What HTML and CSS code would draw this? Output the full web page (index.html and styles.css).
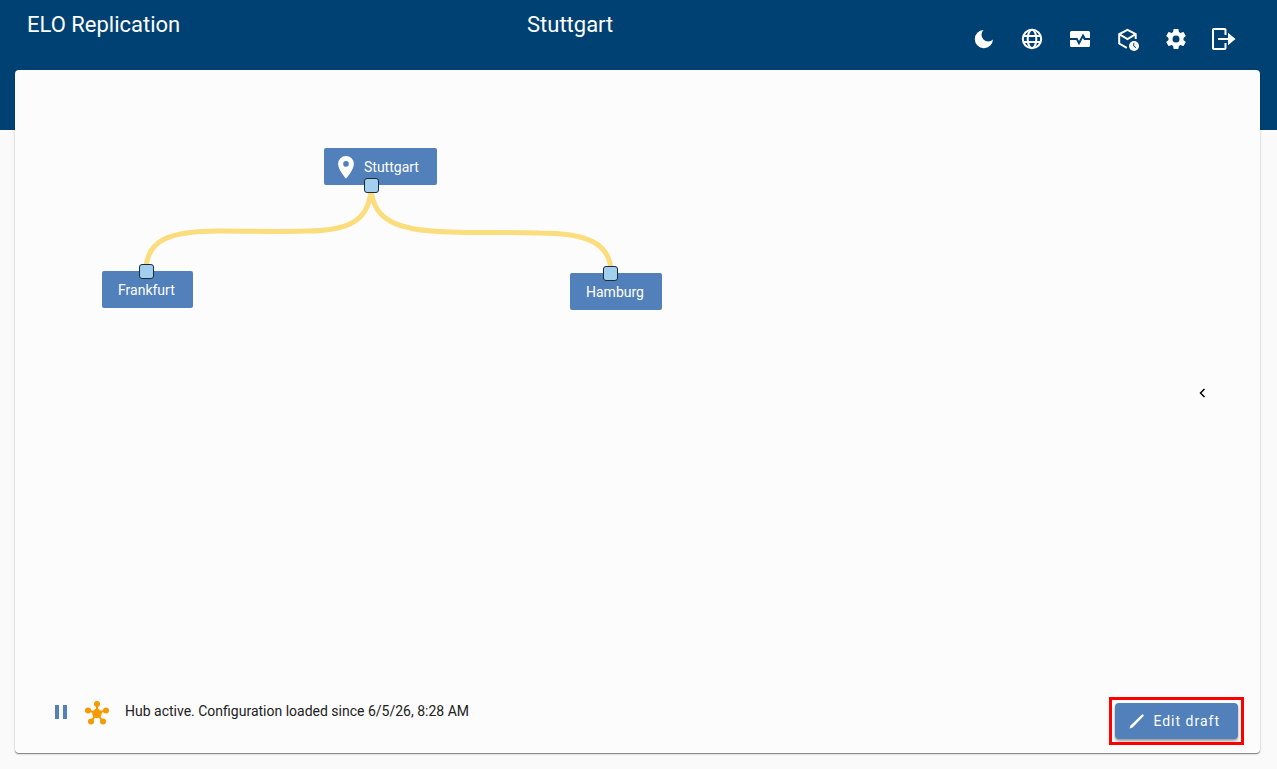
FILE: index.html
```
<!DOCTYPE html>
<html lang="en">
<head>
<meta charset="utf-8">
<title>ELO Replication</title>
<link rel="stylesheet" href="styles.css">
</head>
<body class="page">
<header class="topbar">
  <h1 class="app-title">ELO Replication</h1>
  <h2 class="hub-title">Stuttgart</h2>
  <nav class="actions" aria-label="Tools">
    <button class="icon-button" type="button" aria-label="Dark mode">
      <svg class="icon" viewBox="0 0 24 24"><path d="M11.500 3A9.100 9.100 0 1 0 21 12.600 5.700 5.700 0 1 1 11.500 3Z"/></svg>
    </button>
    <button class="icon-button" type="button" aria-label="Language">
      <svg class="icon" viewBox="0 0 24 24"><g class="line"><circle cx="12" cy="12" r="9.200"/><ellipse cx="12" cy="12" rx="4.300" ry="9.200"/><path d="M3.500 9h17M3.500 15h17"/></g></svg>
    </button>
    <button class="icon-button" type="button" aria-label="Monitoring">
      <svg class="icon" viewBox="0 0 24 24"><path d="M3.500 4h17A1.500 1.500 0 0 1 22 5.500V11h-4.500L15 6.500 11 14 9.500 11H2V5.500A1.500 1.500 0 0 1 3.500 4Z"/><path d="M2 13h6.200l2.800 5.200L14.800 11l1.300 2H22v5.500A1.500 1.500 0 0 1 20.500 20h-17A1.500 1.500 0 0 1 2 18.500Z"/></svg>
    </button>
    <button class="icon-button" type="button" aria-label="Package history">
      <svg class="icon" viewBox="0 0 24 24"><path class="line" d="M10.800 20.800 3.200 16.500V7.200L11.500 2.800l8.200 4.400V12M3.200 7.200l8.300 5 8.200-5"/><circle cx="18" cy="19" r="5"/><path class="clock-hands" d="M17.800 15.800V19.200l2.200 1.500"/></svg>
    </button>
    <button class="icon-button" type="button" aria-label="Settings">
      <svg class="icon" viewBox="0 0 24 24"><path d="M19.43 12.98c.04-.32.07-.64.07-.98s-.03-.66-.07-.98l2.11-1.65c.19-.15.24-.42.12-.64l-2-3.46c-.12-.22-.39-.3-.61-.22l-2.49 1c-.52-.4-1.08-.73-1.69-.98l-.38-2.65C14.46 2.18 14.25 2 14 2h-4c-.25 0-.46.18-.49.42l-.38 2.65c-.61.25-1.17.59-1.69.98l-2.49-1c-.23-.09-.49 0-.61.22l-2 3.46c-.13.22-.07.49.12.64l2.11 1.65c-.04.32-.07.65-.07.98s.03.66.07.98l-2.11 1.65c-.19.15-.24.42-.12.64l2 3.46c.12.22.39.3.61.22l2.49-1c.52.4 1.08.73 1.69.98l.38 2.65c.03.24.24.42.49.42h4c.25 0 .46-.18.49-.42l.38-2.65c.61-.25 1.17-.59 1.69-.98l2.49 1c.23.09.49 0 .61-.22l2-3.46c.12-.22.07-.49-.12-.64l-2.11-1.65zM12 15.5a3.5 3.5 0 1 1 0-7 3.5 3.5 0 0 1 0 7z"/></svg>
    </button>
    <button class="icon-button" type="button" aria-label="Log out">
      <svg class="icon" viewBox="0 0 24 24"><path class="line" d="M13.500 8V2.800Q13.500 2 12.700 2H1.800Q1 2 1 2.800V21.200Q1 22 1.800 22H12.700Q13.500 22 13.500 21.200V16M6 12H18"/><path d="M16 5.800 23.500 12 16 18.200Z"/></svg>
    </button>
  </nav>
</header>

<main class="card">
  <section class="canvas" aria-label="Replication topology">
    <svg class="links" aria-hidden="true">
      <path class="link" d="M356 115C356 150 335 161 291 161C261 162 231 161 204 161C156 161 131 169 131 201"/>
      <path class="link" d="M356 115C356 150 381 161 436 162C462 163 492 162 524 163C572 163 596 173 596 203"/>
    </svg>
    <div class="node node-stuttgart">
      <svg class="pin" viewBox="0 0 24 24"><path d="M12 1a7.9 7.9 0 0 0-7.9 7.9C4.1 14.8 12 23.5 12 23.5s7.900-8.700 7.900-14.600A7.9 7.9 0 0 0 12 1Zm0 10.700a2.800 2.800 0 1 1 0-5.600 2.800 2.800 0 0 1 0 5.600Z"/></svg>
      <span>Stuttgart</span>
    </div>
    <div class="node node-frankfurt">Frankfurt</div>
    <div class="node node-hamburg">Hamburg</div>
    <span class="port port-stuttgart"></span>
    <span class="port port-frankfurt"></span>
    <span class="port port-hamburg"></span>
    <button class="panel-toggle" type="button" aria-label="Open side panel">
      <svg class="chevron" viewBox="0 0 10 10"><path d="M7.500 1 3.500 5l4 4"/></svg>
    </button>
  </section>
  <footer class="statusbar">
    <div class="status">
      <button class="pause" type="button" aria-label="Pause hub">
        <svg class="pause-icon" viewBox="0 0 14 14"><path d="M1 0h4v14H1zM9 0h4v14H9z"/></svg>
      </button>
      <svg class="hub-icon" viewBox="0 0 24 24"><path class="spokes" d="M12 12V3M12 12 3 9.500M12 12 21 9.500M12 12 6 21M12 12 18 21"/><circle cx="12" cy="12.500" r="4.700"/><circle cx="12" cy="3" r="3"/><circle cx="3" cy="9.500" r="3"/><circle cx="21" cy="9.500" r="3"/><circle cx="6" cy="20.500" r="3"/><circle cx="18" cy="20.500" r="3"/></svg>
      <p class="status-text">Hub active. Configuration loaded since 6/5/26, 8:28 AM</p>
    </div>
    <div class="highlight">
      <button class="edit" type="button">
        <svg class="pencil" viewBox="0 0 16 16"><path d="M.500 15.500 1.500 12.500 12.800 1.700Q13.700 1 14.400 1.700T14.400 3.300L3.600 14.500Z"/></svg>
        Edit draft
      </button>
    </div>
  </footer>
</main>
</body>
</html>
```

FILE: styles.css
```
* {
  box-sizing: border-box;
}

.page {
  display: flex;
  flex-direction: column;
  min-height: 100vh;
  margin: 0;
  padding: 0 17px 16px 15px;
  background: linear-gradient(#004173 130px, #fafafa 130px);
  color: #212121;
  font-family: Roboto, sans-serif;
  font-size: 14px;
}

button {
  border: 0;
  padding: 0;
  background: none;
  font: inherit;
  cursor: pointer;
}

.topbar {
  display: grid;
  grid-template-columns: 500px 1fr auto;
  height: 70px;
  padding: 15px 12px 7px;
  color: #fff;
}

.app-title,
.hub-title {
  margin: 0;
  font-size: 22px;
  font-weight: 400;
  line-height: 20px;
}

.actions {
  display: flex;
}

.icon-button {
  display: flex;
  align-items: center;
  justify-content: center;
  width: 48px;
  height: 48px;
  color: #fff;
}

.icon {
  width: 24px;
  height: 24px;
  fill: currentColor;
}

.line {
  fill: none;
  stroke: currentColor;
  stroke-width: 2;
}

.clock-hands {
  fill: none;
  stroke: #004173;
  stroke-width: 1;
}

.card {
  display: flex;
  flex: 1;
  flex-direction: column;
  border-radius: 4px;
  background: #fcfcfc;
  box-shadow: 0 1px 1px rgba(0, 0, 0, 0.45), 0 1px 3px rgba(0, 0, 0, 0.12);
}

.canvas {
  position: relative;
  flex: 1;
}

.links {
  position: absolute;
  inset: 0;
  width: 100%;
  height: 100%;
}

.link {
  fill: none;
  stroke: #fbdd7e;
  stroke-width: 5;
}

.node {
  position: absolute;
  display: flex;
  align-items: center;
  height: 37px;
  padding: 0 18px 0 16px;
  border-radius: 2px;
  background: #5180ba;
  color: #fff;
  line-height: 20px;
}

.node-stuttgart {
  top: 78px;
  left: 309px;
  gap: 6px;
  padding-left: 10px;
}

.node-frankfurt {
  top: 201px;
  left: 87px;
}

.node-hamburg {
  top: 203px;
  left: 555px;
}

.pin {
  width: 24px;
  height: 24px;
  fill: #fff;
}

.port {
  position: absolute;
  width: 15px;
  height: 15px;
  border: 1px solid #1c2b38;
  border-radius: 3px;
  background: #a3cfee;
}

.port-stuttgart {
  top: 108px;
  left: 349px;
}

.port-frankfurt {
  top: 194px;
  left: 124px;
}

.port-hamburg {
  top: 196px;
  left: 588px;
}

.panel-toggle {
  position: absolute;
  top: 311px;
  right: 46px;
  display: flex;
  align-items: center;
  justify-content: center;
  width: 24px;
  height: 24px;
}

.chevron {
  width: 10px;
  height: 10px;
  fill: none;
  stroke: #000;
  stroke-width: 1.5;
}

.statusbar {
  display: flex;
  align-items: flex-end;
  justify-content: space-between;
  padding: 0 16px 8px 39px;
}

.status {
  display: flex;
  align-items: center;
  padding-bottom: 20px;
}

.pause {
  display: flex;
  margin-right: 17px;
  padding-bottom: 2px;
}

.pause-icon {
  width: 14px;
  height: 14px;
  fill: #5180ba;
}

.hub-icon {
  width: 24px;
  height: 24px;
  margin-right: 16px;
  fill: #f59a00;
}

.spokes {
  stroke: #f59a00;
  stroke-width: 2;
}

.status-text {
  margin: 0;
  padding-bottom: 4px;
  line-height: 20px;
}

.highlight {
  padding: 3px;
  border: 3px solid #f00;
}

.edit {
  display: flex;
  align-items: center;
  gap: 8px;
  height: 36px;
  padding: 0 18px 1px 14px;
  border-radius: 4px;
  background: #5180ba;
  box-shadow: 0 2px 3px rgba(0, 0, 0, 0.4);
  color: #fff;
  letter-spacing: 1px;
}

.pencil {
  width: 16px;
  height: 16px;
  fill: #fff;
}
```
